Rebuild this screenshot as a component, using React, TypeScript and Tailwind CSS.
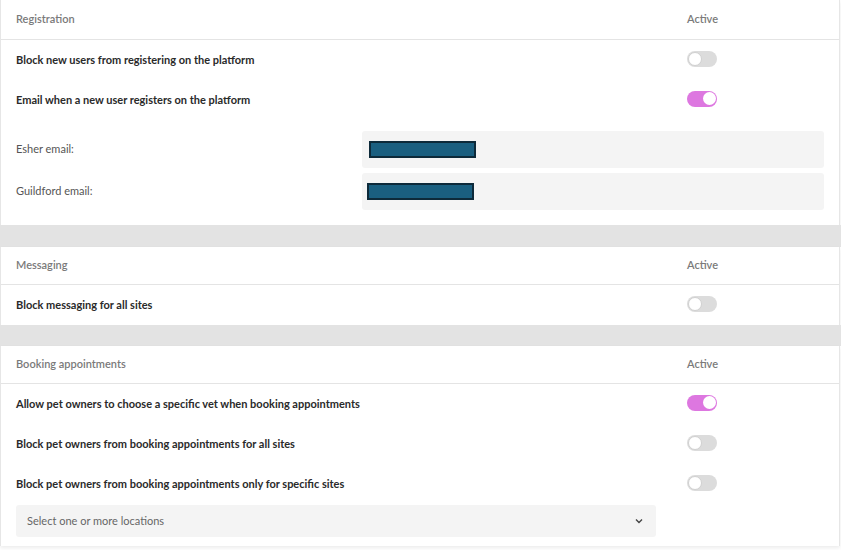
import React from "react";

type Row = { label: string; on: boolean };

function Toggle({ on }: { on: boolean }) {
  return (
    <div
      className={
        on
          ? "w-[30px] h-[16px] rounded-full bg-[#dd77e0] flex items-center justify-end px-[1.5px]"
          : "w-[30px] h-[16px] rounded-full bg-[#dcdcdc] flex items-center justify-start px-[1px]"
      }
    >
      <div
        className={
          on
            ? "w-[13px] h-[13px] rounded-full bg-white"
            : "w-[14px] h-[14px] rounded-full bg-white border border-[#d0d0d0]"
        }
      />
    </div>
  );
}

function Header({ title, tall }: { title: string; tall?: boolean }) {
  return (
    <div
      className={
        tall
          ? "flex items-center h-[40px] border-b border-[#e4e4e4] pl-[15px]"
          : "flex items-center h-[38px] border-b border-[#e4e4e4] pl-[15px]"
      }
    >
      <span className="flex-1 text-[11px] font-semibold text-[#7a7a7a]">{title}</span>
      <span className="w-[30px] mr-[122px] text-center text-[11px] font-semibold text-[#7a7a7a]">
        Active
      </span>
    </div>
  );
}

function ToggleRow({ label, on }: Row) {
  return (
    <div className="flex items-center h-[40px] pl-[15px]">
      <span className="flex-1 text-[11px] font-bold text-[#2a2a2a]">{label}</span>
      <div className="mr-[122px] -mt-[3px]">
        <Toggle on={on} />
      </div>
    </div>
  );
}

function EmailField({ label, shift }: { label: string; shift: boolean }) {
  return (
    <div className="flex items-center h-[37px] pl-[15px] pr-[15px]">
      <span className="w-[346px] text-[11px] text-[#555]">{label}</span>
      <div className="flex-1 h-full bg-[#f4f4f4] rounded-[3px] flex items-center">
        <div
          className={
            shift
              ? "ml-[5px] w-[107px] h-[17px] bg-[#1a5f80] border-2 border-[#0d2a3a]"
              : "ml-[7px] w-[107px] h-[17px] bg-[#1a5f80] border-2 border-[#0d2a3a]"
          }
        />
      </div>
    </div>
  );
}

function Card({ children }: { children: React.ReactNode }) {
  return (
    <div className="bg-white border-x border-[#e6e6e6] mr-[1px] shadow-[0_2px_4px_rgba(0,0,0,0.08)]">
      {children}
    </div>
  );
}

export default function App() {
  return (
    <div className="w-[841px] h-[550px] bg-white font-['Lato',sans-serif] overflow-hidden">
      <Card>
        <Header title="Registration" tall />
        <ToggleRow label="Block new users from registering on the platform" on={false} />
        <ToggleRow label="Email when a new user registers on the platform" on={true} />
        <div className="flex flex-col gap-[5px] pt-[11px] pb-[15px]">
          <EmailField label="Esher email:" shift={false} />
          <EmailField label="Guildford email:" shift={true} />
        </div>
      </Card>
      <div className="h-[22px] bg-[#e3e3e3]" />
      <Card>
        <Header title="Messaging" />
        <ToggleRow label="Block messaging for all sites" on={false} />
      </Card>
      <div className="h-[21px] bg-[#e3e3e3]" />
      <Card>
        <Header title="Booking appointments" />
        <ToggleRow
          label="Allow pet owners to choose a specific vet when booking appointments"
          on={true}
        />
        <ToggleRow label="Block pet owners from booking appointments for all sites" on={false} />
        <ToggleRow
          label="Block pet owners from booking appointments only for specific sites"
          on={false}
        />
        <div className="pl-[15px] pt-[1px] pb-[9px]">
          <div className="w-[640px] h-[32px] bg-[#f4f4f4] rounded-[3px] flex items-center justify-between pl-[11px] pr-[13px]">
            <span className="text-[11px] text-[#666]">Select one or more locations</span>
            <svg width="8" height="6" viewBox="0 0 8 6" fill="none">
              <path d="M1 1.5 L4 4.5 L7 1.5" stroke="#444" strokeWidth="1.4" />
            </svg>
          </div>
        </div>
      </Card>
    </div>
  );
}
